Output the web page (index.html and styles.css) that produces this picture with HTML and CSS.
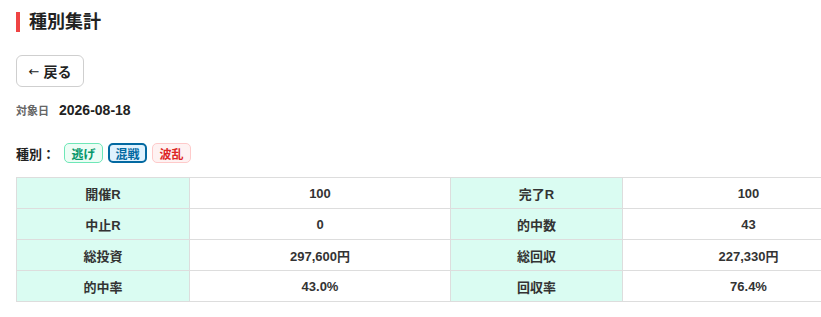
FILE: index.html
```html
<!DOCTYPE html>
<html lang="ja">
<head>
<meta charset="utf-8">
<title>種別集計</title>
<link rel="stylesheet" href="styles.css">
</head>
<body>
<div class="page">
  <h1 class="title">種別集計</h1>
  <button class="back" type="button"><span class="arrow">←</span>戻る</button>
  <div class="meta"><span class="meta-label">対象日</span><span class="meta-value">2026-08-18</span></div>
  <div class="types">
    <span class="types-label">種別：</span>
    <span class="badge badge-nige">逃げ</span>
    <span class="badge badge-konsen">混戦</span>
    <span class="badge badge-haran">波乱</span>
  </div>
  <div class="table-wrap">
    <table class="stats">
      <colgroup><col class="c1"><col class="c2"><col class="c3"><col class="c4"></colgroup>
      <tbody>
        <tr><th>開催R</th><td>100</td><th>完了R</th><td>100</td></tr>
        <tr><th>中止R</th><td>0</td><th>的中数</th><td>43</td></tr>
        <tr><th>総投資</th><td>297,600円</td><th>総回収</th><td>227,330円</td></tr>
        <tr><th>的中率</th><td>43.0%</td><th>回収率</th><td>76.4%</td></tr>
      </tbody>
    </table>
  </div>
</div>
</body>
</html>
```
FILE: styles.css
```css
html, body {
  margin: 0;
  padding: 0;
  background: #fff;
}
body {
  font-family: "Liberation Sans", "Noto Sans CJK JP", sans-serif;
  color: #222;
  overflow: hidden;
}
.page {
  padding: 12px 0 16px 16px;
}
.title {
  margin: 0 0 23px 0;
  font-size: 18px;
  line-height: 20px;
  font-weight: 700;
  color: #222;
  border-left: 4px solid #ef4444;
  padding-left: 9px;
}
.back {
  display: flex;
  align-items: center;
  justify-content: center;
  box-sizing: border-box;
  width: 68px;
  height: 32px;
  padding: 0;
  margin: 0;
  background: #fff;
  border: 1px solid #cfcfcf;
  border-radius: 6px;
  font-family: inherit;
  font-size: 14px;
  font-weight: 700;
  color: #222;
}
.arrow {
  font-family: "DejaVu Sans", sans-serif;
  font-weight: 400;
  font-size: 13px;
  margin-right: 4px;
}
.meta {
  margin-top: 14px;
  display: flex;
  align-items: center;
  gap: 10px;
  height: 18px;
}
.meta-label {
  font-size: 11px;
  font-weight: 700;
  color: #666;
}
.meta-value {
  font-size: 14px;
  font-weight: 700;
  color: #222;
}
.types {
  margin-top: 24px;
  display: flex;
  align-items: center;
  height: 20px;
}
.types-label {
  font-size: 13px;
  font-weight: 700;
  color: #222;
  margin-right: 9px;
}
.badge {
  box-sizing: border-box;
  display: inline-flex;
  align-items: center;
  justify-content: center;
  width: 39px;
  height: 20px;
  border-radius: 5px;
  font-size: 12px;
  font-weight: 700;
  margin-right: 5px;
}
.badge-nige {
  color: #059669;
  background: #ecfdf5;
  border: 1px solid #6ee7b7;
}
.badge-konsen {
  color: #0369a1;
  background: #e0f2fe;
  border: 2px solid #0369a1;
}
.badge-haran {
  color: #dc2626;
  background: #fef2f2;
  border: 1px solid #fecaca;
}
.table-wrap {
  margin-top: 14px;
  width: 805px;
  overflow: hidden;
}
.stats {
  border-collapse: collapse;
  table-layout: fixed;
  width: 858px;
}
.c1 { width: 173px; }
.c2 { width: 261px; }
.c3 { width: 172px; }
.c4 { width: 252px; }
.stats th, .stats td {
  border: 1px solid #dddddd;
  height: 30px;
  padding: 0;
  text-align: center;
  font-size: 13px;
  font-weight: 700;
  color: #333;
}
.stats th {
  background: #dafcf2;
}
.stats td {
  background: #fff;
}
```
